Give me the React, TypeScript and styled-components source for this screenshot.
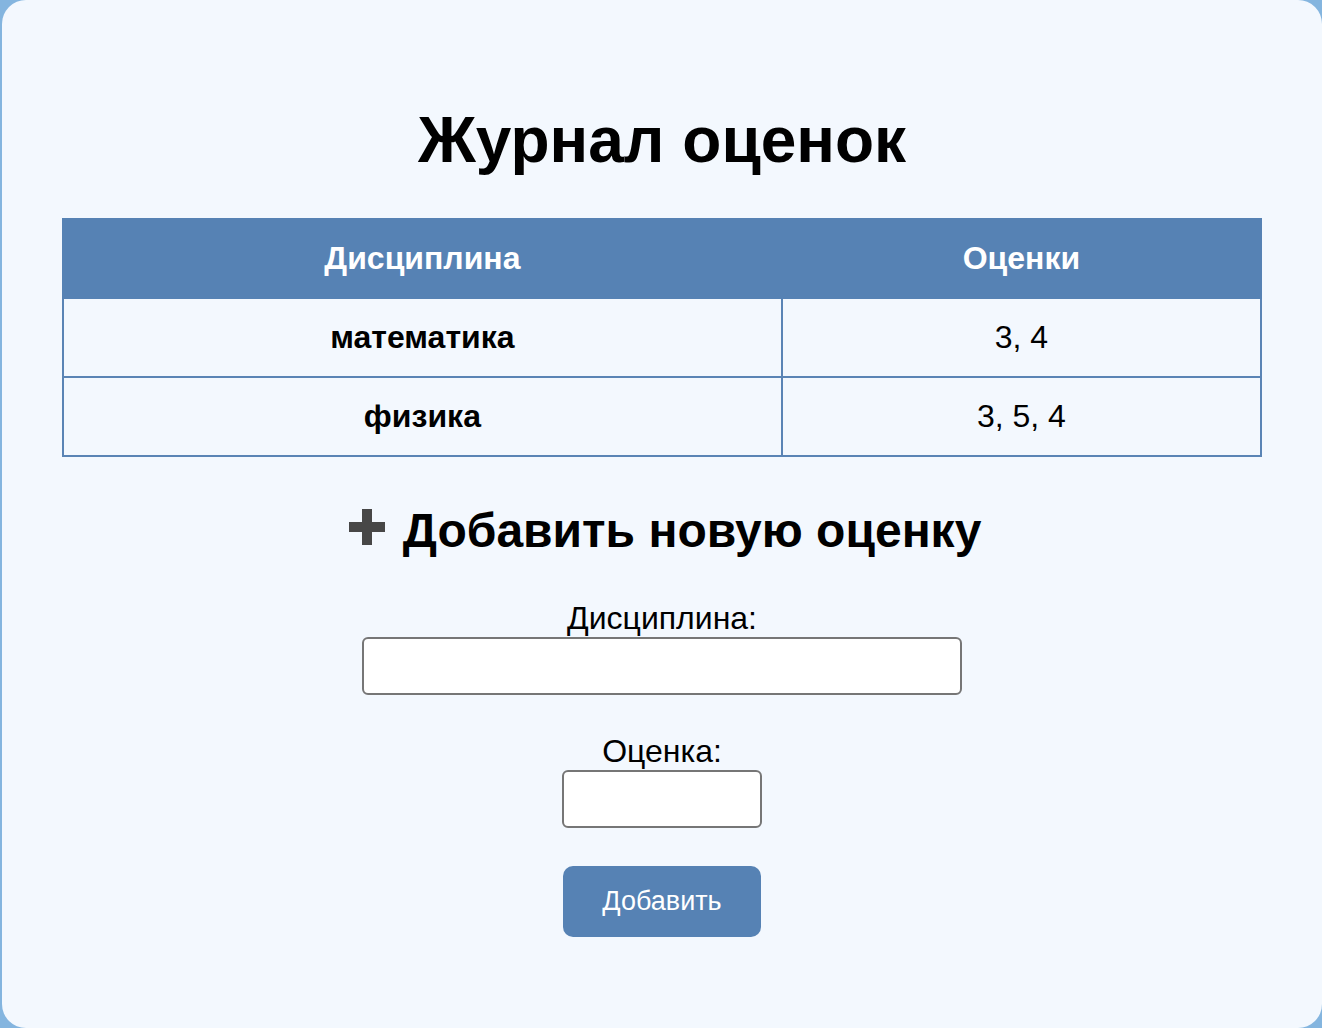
import React from "react";
import styled, { createGlobalStyle } from "styled-components";

const Global = createGlobalStyle`
  html, body {
    margin: 0;
    padding: 0;
    background: #84b5df;
    font-family: "Liberation Sans", Arial, sans-serif;
  }
`;

const Card = styled.div`
  margin: 0 0 0 2px;
  min-height: 1028px;
  box-sizing: border-box;
  background: #f3f8fe;
  border-radius: 24px;
  padding: 103px 0 40px;
  display: flex;
  flex-direction: column;
  align-items: center;
`;

const Title = styled.h1`
  margin: 0 0 41px;
  font-size: 64px;
  font-weight: 700;
  color: #000;
  line-height: normal;
`;

const Table = styled.table`
  width: 1200px;
  border-collapse: collapse;
  font-size: 32px;
`;

const Th = styled.th<{ $w: string }>`
  width: ${(p) => p.$w};
  background: #5682b4;
  color: #fff;
  font-weight: 700;
  padding: 20px;
  border: 2px solid #5682b4;
  text-align: center;
  line-height: normal;
`;

const Td = styled.td<{ $bold?: boolean }>`
  border: 2px solid #5a84b5;
  padding: 20px;
  text-align: center;
  font-weight: ${(p) => (p.$bold ? 700 : 400)};
  color: #000;
  line-height: normal;
`;

const SubTitle = styled.h2`
  margin: 46px 0 42px;
  padding-left: 6px;
  font-size: 48px;
  font-weight: 700;
  line-height: normal;
  display: flex;
  align-items: center;
  gap: 18px;
`;

const PlusSvg = styled.svg`
  flex: none;
  margin-bottom: 8px;
`;

const Form = styled.form`
  display: flex;
  flex-direction: column;
  align-items: center;
`;

const Field = styled.div`
  display: flex;
  flex-direction: column;
  align-items: center;
  margin-bottom: 38px;
`;

const Label = styled.label`
  font-size: 32px;
  line-height: 37px;
  color: #000;
`;

const Input = styled.input<{ $w: number }>`
  width: ${(p) => p.$w}px;
  height: 58px;
  box-sizing: border-box;
  border: 2px solid #767676;
  border-radius: 6px;
  background: #fff;
  font-size: 28px;
  font-family: inherit;
  padding: 0 10px;
  outline: none;
`;

const Button = styled.button`
  width: 198px;
  height: 71px;
  border: none;
  border-radius: 10px;
  background: #5682b4;
  color: #fff;
  font-family: "Liberation Sans", Arial, sans-serif;
  font-size: 27px;
  cursor: pointer;
`;

const PlusIcon = () => (
  <PlusSvg width="36" height="36" viewBox="0 0 36 36" aria-hidden="true">
    <rect x="0" y="13" width="36" height="10" fill="#474747" />
    <rect x="13" y="0" width="10" height="36" fill="#474747" />
  </PlusSvg>
);

const rows = [
  { subject: "математика", grades: "3, 4" },
  { subject: "физика", grades: "3, 5, 4" },
];

export default function App() {
  return (
    <>
      <Global />
      <Card>
        <Title>Журнал оценок</Title>
        <Table>
          <thead>
            <tr>
              <Th $w="60%">Дисциплина</Th>
              <Th $w="40%">Оценки</Th>
            </tr>
          </thead>
          <tbody>
            {rows.map((r) => (
              <tr key={r.subject}>
                <Td $bold>{r.subject}</Td>
                <Td>{r.grades}</Td>
              </tr>
            ))}
          </tbody>
        </Table>
        <SubTitle>
          <PlusIcon />
          Добавить новую оценку
        </SubTitle>
        <Form onSubmit={(e) => e.preventDefault()}>
          <Field>
            <Label htmlFor="subject">Дисциплина:</Label>
            <Input id="subject" type="text" $w={600} />
          </Field>
          <Field>
            <Label htmlFor="grade">Оценка:</Label>
            <Input id="grade" type="text" $w={200} />
          </Field>
          <Button type="submit">Добавить</Button>
        </Form>
      </Card>
    </>
  );
}
